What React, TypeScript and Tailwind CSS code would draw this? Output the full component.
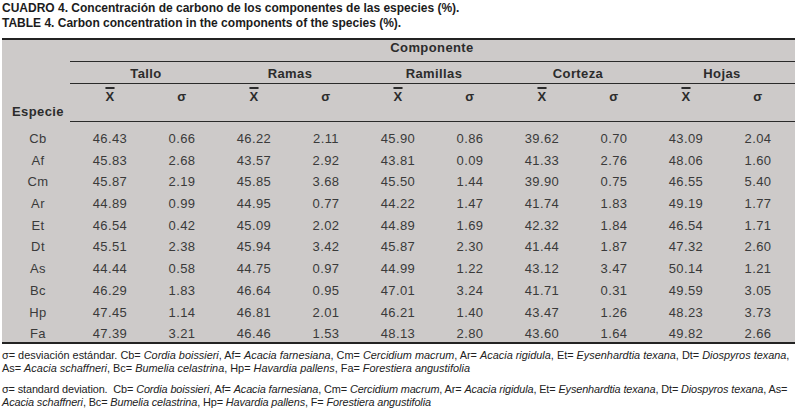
const rows = [
  ['Cb', '46.43', '0.66', '46.22', '2.11', '45.90', '0.86', '39.62', '0.70', '43.09', '2.04'],
  ['Af', '45.83', '2.68', '43.57', '2.92', '43.81', '0.09', '41.33', '2.76', '48.06', '1.60'],
  ['Cm', '45.87', '2.19', '45.85', '3.68', '45.50', '1.44', '39.90', '0.75', '46.55', '5.40'],
  ['Ar', '44.89', '0.99', '44.95', '0.77', '44.22', '1.47', '41.74', '1.83', '49.19', '1.77'],
  ['Et', '46.54', '0.42', '45.09', '2.02', '44.89', '1.69', '42.32', '1.84', '46.54', '1.71'],
  ['Dt', '45.51', '2.38', '45.94', '3.42', '45.87', '2.30', '41.44', '1.87', '47.32', '2.60'],
  ['As', '44.44', '0.58', '44.75', '0.97', '44.99', '1.22', '43.12', '3.47', '50.14', '1.21'],
  ['Bc', '46.29', '1.83', '46.64', '0.95', '47.01', '3.24', '41.71', '0.31', '49.59', '3.05'],
  ['Hp', '47.45', '1.14', '46.81', '2.01', '46.21', '1.40', '43.47', '1.26', '48.23', '3.73'],
  ['Fa', '47.39', '3.21', '46.46', '1.53', '48.13', '2.80', '43.60', '1.64', '49.82', '2.66'],
];

const groups = ['Tallo', 'Ramas', 'Ramillas', 'Corteza', 'Hojas'];

const App = () => {
  return (
    <div className="w-[795px] h-[409px] bg-white pl-[2px] font-['Liberation_Sans',Arial,sans-serif] overflow-hidden">
      {/* titles */}
      <div className="pt-[1px] text-[12px] font-bold text-[#1c1c1c] whitespace-nowrap">
        <p className="leading-[14px]">CUADRO 4. Concentración de carbono de los componentes de las especies (%).</p>
        <p className="leading-[16px]">TABLE 4. Carbon concentration in the components of the species (%).</p>
      </div>

      <div className="mt-[7px] bg-[#cdcac9] text-[#2c2c2c]">
        <div className="h-[2px] bg-[#232323]" />

        <div className="flex font-bold text-[13px] tracking-[0.4px] leading-[15px]">
          <div className="w-[68px] flex items-end pb-[3px] pl-[4px] justify-center">Especie</div>
          <div className="flex-1">
            <div className="h-[22px] border-b border-[#2a2a2a] text-center pr-[1px]">Componente</div>
            <div className="h-[22px] border-b border-[#2a2a2a] pt-[4px] pl-[4px] grid grid-cols-[repeat(5,144px)] text-center">
              {groups.map((g) => (
                <span key={g}>{g}</span>
              ))}
            </div>
            <div className="h-[38px] border-b border-[#2a2a2a] pt-[5px] pl-[4px] grid grid-cols-[repeat(10,72px)] items-start text-center">
              {groups.map((g) => [
                <span key={g + 'x'}>
                  <span className="overline decoration-[1.5px]">X</span>
                </span>,
                <span key={g + 's'}>σ</span>,
              ])}
            </div>
          </div>
        </div>

        <div className="pt-[6px] text-[13px] tracking-[0.4px] text-[#3a3a3a]">
          {rows.map((r) => (
            <div key={r[0]} className="grid grid-cols-[72px_repeat(10,72px)] h-[21.7px] leading-[21.7px] text-center">
              {r.map((v, i) => (
                <span key={i}>{v}</span>
              ))}
            </div>
          ))}
        </div>
        <div className="h-[2px] -mt-[3px] relative bg-[#232323]" />
      </div>

      {/* notes */}
      <div className="mt-[5px] text-[10.9px] leading-[13px] text-[#222] whitespace-nowrap">
        <p>
          σ= desviación estándar. Cb= <i>Cordia boissieri</i>, Af= <i>Acacia farnesiana</i>, Cm= <i>Cercidium macrum</i>, Ar= <i>Acacia rigidula</i>, Et= <i>Eysenhardtia texana</i>, Dt= <i>Diospyros texana</i>,
        </p>
        <p>
          As= <i>Acacia schaffneri</i>, Bc= <i>Bumelia celastrina</i>, Hp= <i>Havardia pallens</i>, Fa= <i>Forestiera angustifolia</i>
        </p>
        <p className="mt-[8px] tracking-[-0.12px]">
          σ= standard deviation.{'\u00a0'} Cb= <i>Cordia boissieri</i>, Af= <i>Acacia farnesiana</i>, Cm= <i>Cercidium macrum</i>, Ar= <i>Acacia rigidula</i>, Et= <i>Eysenhardtia texana</i>, Dt= <i>Diospyros texana</i>, As=
        </p>
        <p className="tracking-[-0.12px]">
          <i>Acacia schaffneri</i>, Bc= <i>Bumelia celastrina</i>, Hp= <i>Havardia pallens</i>, F= <i>Forestiera angustifolia</i>
        </p>
      </div>
    </div>
  );
};

export default App;
